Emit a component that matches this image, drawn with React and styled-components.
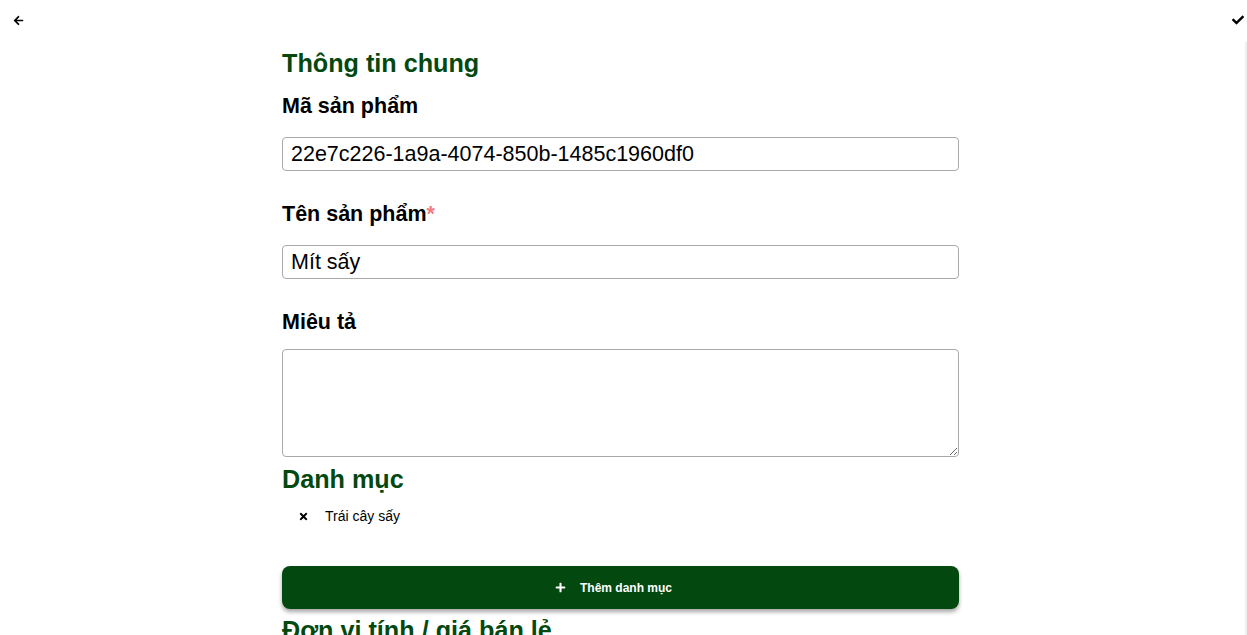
import React from "react";
import styled, { createGlobalStyle } from "styled-components";
import { FaArrowLeft, FaCheck, FaTimes, FaPlus } from "react-icons/fa";

const Global = createGlobalStyle`
  html, body { margin: 0; padding: 0; background: #fff; overflow: hidden; }
  body { font-family: "Liberation Sans", Arial, sans-serif; color: #000; }
  * { box-sizing: border-box; }
`;

const green = "#03480f";

const Page = styled.div`
  height: 100vh;
  display: flex;
  flex-direction: column;
`;

const TopBar = styled.div`
  height: 42px;
  flex: none;
  display: flex;
  justify-content: space-between;
  align-items: flex-start;
  padding: 14px 3px 0 12px;
`;

const IconButton = styled.button`
  border: 0;
  background: none;
  padding: 0;
  width: 12px;
  height: 12px;
  display: flex;
  align-items: center;
  justify-content: center;
  color: #000;
  font-size: ${(p) => p.$size || 11}px;
`;

const Body = styled.div`
  flex: 1;
  display: flex;
  min-height: 0;
`;

const Main = styled.main`
  flex: 1;
  padding-right: 4px;
  overflow: hidden;
`;

const Track = styled.div`
  width: 2px;
  flex: none;
  background: #efefef;
`;

const Form = styled.form`
  width: 677px;
  margin: 0 auto;
`;

const SectionTitle = styled.h2`
  margin: ${(p) => p.$top || 0}px 0 0;
  font-size: 25.2px;
  line-height: 30px;
  font-weight: 700;
  color: ${green};
`;

const Label = styled.label`
  display: block;
  margin-top: ${(p) => p.$top}px;
  font-size: 21.5px;
  line-height: 25px;
  font-weight: 700;
`;

const Required = styled.span`
  color: #f77b7b;
`;

const Input = styled.input`
  display: block;
  width: 100%;
  height: 34px;
  margin-top: 18px;
  padding: 0 8px;
  border: 1px solid #aaa;
  border-radius: 4px;
  font-family: inherit;
  font-size: 21.5px;
  color: #000;
  outline: none;
`;

const TextArea = styled.textarea`
  display: block;
  width: 100%;
  height: 108px;
  margin-top: 14px;
  padding: 4px 8px;
  border: 1px solid #aaa;
  border-radius: 4px;
  font-family: inherit;
  font-size: 21.5px;
  outline: none;
`;

const TagList = styled.ul`
  list-style: none;
  margin: 12px 0 0;
  padding: 0 0 0 16px;
`;

const Tag = styled.li`
  display: flex;
  align-items: center;
  height: 20px;
  gap: 16px;
  font-size: 14px;
  svg { font-size: 11px; width: 11px; }
`;

const AddButton = styled.button`
  display: flex;
  align-items: center;
  justify-content: center;
  gap: 14px;
  width: 100%;
  height: 43px;
  margin-top: 40px;
  padding: 0 14px 0 0;
  border: 0;
  border-radius: 8px;
  background: ${green};
  color: #fff;
  font-family: inherit;
  font-size: 12px;
  font-weight: 700;
  box-shadow: 0 3px 4px rgba(0, 0, 0, 0.35);
  cursor: pointer;
  svg { font-size: 11px; }
`;

export default function App() {
  return (
    <>
      <Global />
      <Page>
        <TopBar>
          <IconButton type="button" $size={11}><FaArrowLeft /></IconButton>
          <IconButton type="button" $size={12}><FaCheck /></IconButton>
        </TopBar>
        <Body>
          <Main>
            <Form onSubmit={(e) => e.preventDefault()}>
              <SectionTitle $top={6}>Thông tin chung</SectionTitle>

              <Label $top={16}>Mã sản phẩm</Label>
              <Input defaultValue="22e7c226-1a9a-4074-850b-1485c1960df0" />

              <Label $top={31}>Tên sản phẩm<Required>*</Required></Label>
              <Input defaultValue="Mít sấy" />

              <Label $top={31}>Miêu tả</Label>
              <TextArea />

              <SectionTitle $top={7}>Danh mục</SectionTitle>
              <TagList>
                <Tag><FaTimes /> Trái cây sấy</Tag>
              </TagList>

              <AddButton type="button"><FaPlus /> Thêm danh mục</AddButton>

              <SectionTitle $top={6}>Đơn vị tính / giá bán lẻ</SectionTitle>
            </Form>
          </Main>
          <Track />
        </Body>
      </Page>
    </>
  );
}
